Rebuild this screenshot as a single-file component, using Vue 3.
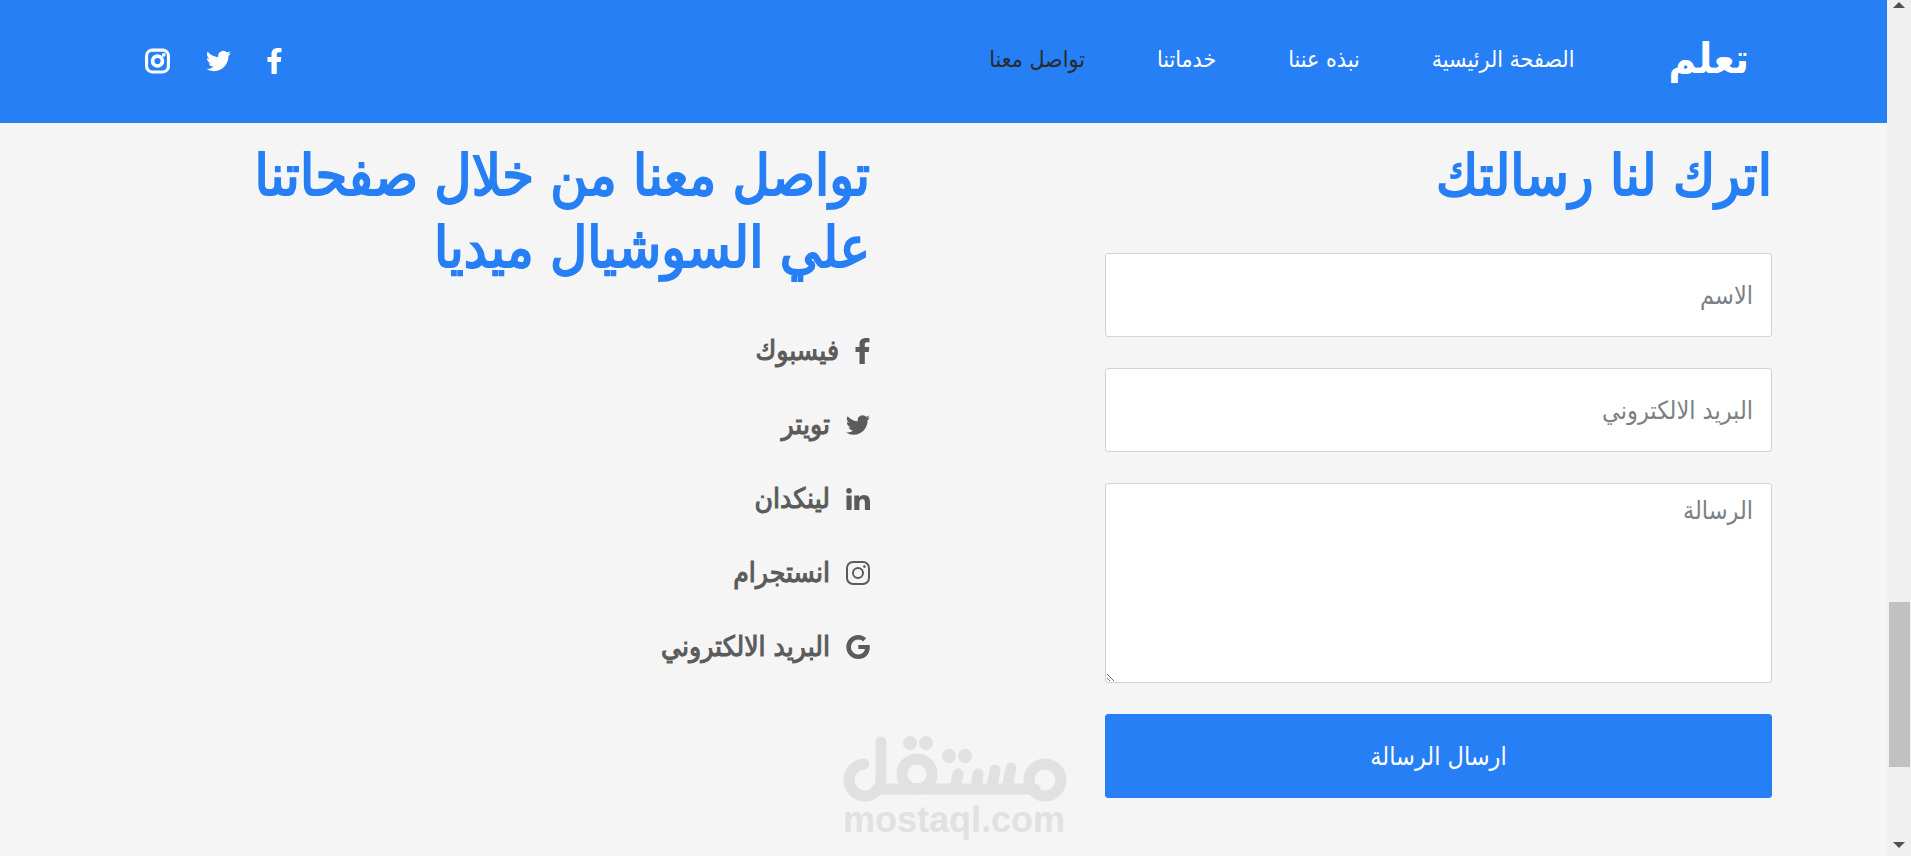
<template>
  <div class="window">
    <div class="page" dir="rtl">
      <header class="navbar">
        <a href="#" class="brand">تعلم</a>
        <nav class="menu">
          <a
            v-for="item in menu"
            :key="item.text"
            :href="item.href"
            class="menu-link"
            :class="{ active: item.active }"
            >{{ item.text }}</a
          >
        </nav>
        <div class="nav-social">
          <a
            v-for="name in ['facebook', 'twitter', 'instagramBold']"
            :key="name"
            href="#"
            :aria-label="name"
          >
            <svg
              class="nav-icon"
              :class="{ narrow: name === 'facebook' }"
              :viewBox="icons[name].box"
            >
              <path :d="icons[name].path" fill-rule="evenodd" />
            </svg>
          </a>
        </div>
      </header>

      <main class="contact">
        <section class="message">
          <h2 class="title">اترك لنا رسالتك</h2>
          <form class="form" @submit.prevent>
            <input
              v-model="form.name"
              class="field"
              type="text"
              placeholder="الاسم"
              aria-label="الاسم"
            />
            <input
              v-model="form.email"
              class="field"
              type="email"
              placeholder="البريد الالكتروني"
              aria-label="البريد الالكتروني"
            />
            <textarea
              v-model="form.message"
              class="field area"
              placeholder="الرسالة"
              aria-label="الرسالة"
            ></textarea>
            <button type="submit" class="send">ارسال الرسالة</button>
          </form>
        </section>

        <section class="social">
          <h2 class="title">تواصل معنا من خلال صفحاتنا علي السوشيال ميديا</h2>
          <ul class="links">
            <li v-for="link in links" :key="link.icon">
              <a href="#" class="link">
                <svg
                  class="link-icon"
                  :class="{ narrow: link.icon === 'facebook' }"
                  :viewBox="icons[link.icon].box"
                >
                  <path :d="icons[link.icon].path" fill-rule="evenodd" />
                </svg>
                <span class="link-text">{{ link.text }}</span>
              </a>
            </li>
          </ul>
        </section>
      </main>

      <div class="watermark" dir="ltr">
        <svg class="watermark-logo" viewBox="0 0 224 68">
          <g fill="none" stroke="#e1e1e1" stroke-width="11" stroke-linecap="round">
            <path d="M21 28A16 16 0 1 0 38 44V6" />
            <path d="M34 53H192" />
            <circle cx="74" cy="38" r="15" />
            <circle cx="202" cy="44" r="16" />
            <path d="M115 38L112 52M135 38L133 52M152 34L149 52M168 32L164 52" />
          </g>
          <g fill="#e1e1e1">
            <circle cx="67" cy="7" r="7" />
            <circle cx="83" cy="7" r="7" />
            <circle cx="106" cy="20" r="7" />
            <circle cx="122" cy="20" r="7" />
          </g>
        </svg>
        <span class="watermark-text">mostaql.com</span>
      </div>
    </div>

    <div class="scrollbar">
      <svg class="arrow" viewBox="0 0 12 6"><path d="M0 6L6 0L12 6z" /></svg>
      <div class="track"><div class="thumb"></div></div>
      <svg class="arrow" viewBox="0 0 12 6"><path d="M0 0L6 6L12 0z" /></svg>
    </div>
  </div>
</template>

<script setup>
import { reactive } from "vue";

const form = reactive({ name: "", email: "", message: "" });

const menu = [
  { text: "الصفحة الرئيسية", href: "#home" },
  { text: "نبذه عننا", href: "#about" },
  { text: "خدماتنا", href: "#services" },
  { text: "تواصل معنا", href: "#contact", active: true },
];

const links = [
  { icon: "facebook", text: "فيسبوك" },
  { icon: "twitter", text: "تويتر" },
  { icon: "linkedin", text: "لينكدان" },
  { icon: "instagram", text: "انستجرام" },
  { icon: "google", text: "البريد الالكتروني" },
];

const icons = {
  facebook: {
    box: "0 0 14 26",
    path: "M14 .2V4.300H11.600C9.700 4.300 9.300 5.200 9.300 6.500V9H13.800L13.200 14H9.300V26H4V14H0V9H4V6C4 2 6.600 0 10.400 0C12.300 0 13.600 .1 14 .2Z",
  },
  twitter: {
    box: "0 0 24 24",
    path: "M23.950 4.570a10 10 0 0 1-2.820.780 4.960 4.960 0 0 0 2.160-2.730c-.950.560-2 .960-3.120 1.190a4.920 4.920 0 0 0-8.380 4.480C7.690 8.100 4.070 6.130 1.640 3.160a4.920 4.920 0 0 0 1.520 6.570 4.900 4.900 0 0 1-2.230-.610v.060a4.920 4.920 0 0 0 3.950 4.830 5 5 0 0 1-2.210.080 4.940 4.940 0 0 0 4.600 3.420A9.870 9.870 0 0 1 0 19.540a14 14 0 0 0 7.550 2.210c9.050 0 14-7.500 14-13.980 0-.210 0-.420-.020-.630a9.940 9.940 0 0 0 2.420-2.570z",
  },
  linkedin: {
    box: "0 0 24 24",
    path: "M.5 8.400H5.600V23H.5ZM3 1A2.800 2.800 0 1 1 3 6.600A2.800 2.800 0 0 1 3 1ZM8.300 8.400H13.200V10.400C14.100 9 15.600 8 17.900 8C22.700 8 24 11.200 24 15V23H18.900V16.200C18.900 14.400 18.800 12.300 16.300 12.300C13.900 12.300 13.400 14.200 13.400 16.200V23H8.300Z",
  },
  instagram: {
    box: "0 0 24 24",
    path: "M7 0H17A7 7 0 0 1 24 7V17A7 7 0 0 1 17 24H7A7 7 0 0 1 0 17V7A7 7 0 0 1 7 0ZM7 2A5 5 0 0 0 2 7V17A5 5 0 0 0 7 22H17A5 5 0 0 0 22 17V7A5 5 0 0 0 17 2ZM12 6A6 6 0 1 1 12 18A6 6 0 0 1 12 6ZM12 8A4 4 0 1 0 12 16A4 4 0 0 0 12 8ZM18.400 4.200A1.400 1.400 0 1 1 18.400 7A1.400 1.400 0 0 1 18.400 4.200Z",
  },
  instagramBold: {
    box: "0 0 24 24",
    path: "M7 0H17A7 7 0 0 1 24 7V17A7 7 0 0 1 17 24H7A7 7 0 0 1 0 17V7A7 7 0 0 1 7 0ZM7 3A4 4 0 0 0 3 7V17A4 4 0 0 0 7 21H17A4 4 0 0 0 21 17V7A4 4 0 0 0 17 3ZM12 5.500A6.500 6.500 0 1 1 12 18.500A6.500 6.500 0 0 1 12 5.500ZM12 9A3 3 0 1 0 12 15A3 3 0 0 0 12 9ZM18 4.200A1.800 1.800 0 1 1 18 7.800A1.800 1.800 0 0 1 18 4.200Z",
  },
  google: {
    box: "0 0 24 24",
    path: "M12.300 9.900V14H19C18.700 15.800 16.900 19.400 12.300 19.400A7.400 7.400 0 0 1 12.300 4.600C14.600 4.600 16.100 5.600 17 6.400L20.200 3.300C18.100 1.300 15.500 0 12.300 0A12 12 0 0 0 12.300 24C19.200 24 23.800 19.100 23.800 12.200C23.800 11.300 23.700 10.600 23.600 9.900Z",
  },
};
</script>

<style>
body {
  margin: 0;
  background: #f5f5f5;
}
</style>

<style scoped>
.window {
  --blue: #267ff4;
  display: grid;
  grid-template-columns: minmax(0, 1fr) 24px;
  min-height: 100vh;
  font-family: "DejaVu Sans Condensed", "DejaVu Sans", sans-serif;
}

.page {
  position: relative;
  background: #f5f5f5;
}

a {
  color: inherit;
  text-decoration: none;
}

/* Navbar */
.navbar {
  display: flex;
  align-items: center;
  box-sizing: border-box;
  height: 123px;
  padding: 0 138px 6px 145px;
  background: var(--blue);
  color: #fff;
}

.brand {
  font-size: 42px;
  font-weight: 700;
}

.menu {
  display: flex;
  gap: 72px;
  margin-right: 94px;
  font-size: 23px;
}

.menu-link.active {
  color: #292b2c;
}

.nav-social {
  display: flex;
  align-items: center;
  gap: 36px;
  margin-right: auto;
  padding-top: 4px;
}

.nav-icon {
  display: block;
  width: 25px;
  height: 26px;
  fill: currentColor;
}

.nav-icon.narrow {
  width: 15px;
}

/* Contact */
.contact {
  display: grid;
  grid-template-columns: 667fr 235fr 667fr 88fr;
  padding: 16px 115px 56px;
}

.message {
  grid-column: 1;
  min-width: 0;
}

.social {
  grid-column: 3;
  min-width: 0;
}

.title {
  margin: 0 0 42px;
  color: var(--blue);
  font-size: 57px;
  font-weight: 400;
  line-height: 72px;
  -webkit-text-stroke: 2px currentColor;
}

.form {
  display: flex;
  flex-direction: column;
  gap: 31px;
}

.field,
.send {
  box-sizing: border-box;
  width: 100%;
  height: 84px;
  border: 1px solid #ced4da;
  border-radius: 3px;
  font-family: inherit;
  font-size: 25px;
}

.field {
  padding: 9px 18px;
  background: #fff;
  color: #495057;
}

.field::placeholder {
  color: #7b8085;
  opacity: 1;
}

.area {
  display: block;
  height: 200px;
  line-height: 36px;
}

.send {
  border-color: var(--blue);
  background: var(--blue);
  color: #fff;
}

.links {
  display: flex;
  flex-direction: column;
  gap: 38px;
  margin: 0;
  padding: 8px 0 0;
  list-style: none;
}

.link {
  display: flex;
  align-items: center;
  gap: 16px;
  color: #5b5b5b;
  font-size: 28px;
  line-height: 36px;
}

.link-text {
  -webkit-text-stroke: 1px currentColor;
}

.link-icon {
  width: 24px;
  height: 24px;
  fill: currentColor;
}

.link-icon.narrow {
  width: 15px;
  height: 26px;
}

/* Watermark */
.watermark {
  position: absolute;
  bottom: 20px;
  left: 843px;
  width: 224px;
}

.watermark-logo {
  display: block;
  width: 100%;
}

.watermark-text {
  display: block;
  color: #e1e1e1;
  font: 700 36px/32px "Liberation Sans", sans-serif;
}

/* Scrollbar */
.scrollbar {
  display: flex;
  flex-direction: column;
  align-items: center;
  padding: 2px 0 8px;
  background: #f0f0f0;
}

.arrow {
  width: 12px;
  height: 6px;
  fill: #505050;
}

.track {
  display: grid;
  grid-template-rows: 594fr 165fr 75fr;
  flex: 1;
  width: 21px;
}

.thumb {
  grid-row: 2;
  background: #c1c1c1;
}
</style>
